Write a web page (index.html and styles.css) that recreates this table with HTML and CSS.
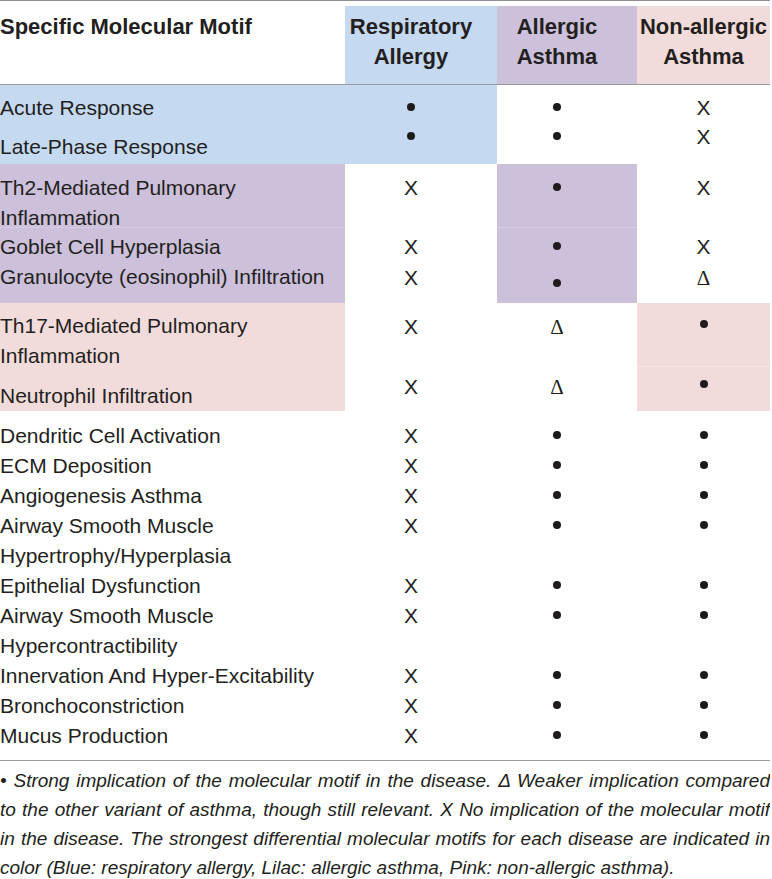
FILE: index.html
```html
<!DOCTYPE html>
<html lang="en">
<head>
<meta charset="utf-8">
<title>Molecular motifs table</title>
<link rel="stylesheet" href="styles.css">
</head>
<body>
<div class="table">
  <div class="row head">
    <div class="th c1">Specific Molecular Motif</div>
    <div class="th c2 blue">Respiratory<br>Allergy</div>
    <div class="th c3 lilac">Allergic<br>Asthma</div>
    <div class="th c4 pink">Non-allergic<br>Asthma</div>
  </div>

  <div class="row r-acute">
    <div class="c1 blue t8">Acute Response</div>
    <div class="c2 blue t8"><span class="dot"></span></div>
    <div class="c3 t8"><span class="dot"></span></div>
    <div class="c4 t8"><span class="x">X</span></div>
  </div>
  <div class="row r-late">
    <div class="c1 blue t10">Late-Phase Response</div>
    <div class="c2 blue t0"><span class="dot"></span></div>
    <div class="c3 t0"><span class="dot"></span></div>
    <div class="c4 t0"><span class="x">X</span></div>
  </div>

  <div class="row r-th2">
    <div class="c1 lilac t9">Th2-Mediated Pulmonary<br>Inflammation</div>
    <div class="c2 t9"><span class="x">X</span></div>
    <div class="c3 lilac t9"><span class="dot"></span></div>
    <div class="c4 t9"><span class="x">X</span></div>
  </div>
  <div class="row r-goblet">
    <div class="c1 lilac sep-l t5">Goblet Cell Hyperplasia</div>
    <div class="c2 t5"><span class="x">X</span></div>
    <div class="c3 lilac sep-l t5"><span class="dot"></span></div>
    <div class="c4 t5"><span class="x">X</span></div>
  </div>
  <div class="row r-gran">
    <div class="c1 lilac t0">Granulocyte (eosinophil) Infiltration</div>
    <div class="c2 t1"><span class="x">X</span></div>
    <div class="c3 lilac t7"><span class="dot"></span></div>
    <div class="c4 t1"><span class="delta">&Delta;</span></div>
  </div>

  <div class="row r-th17">
    <div class="c1 pink t8">Th17-Mediated Pulmonary<br>Inflammation</div>
    <div class="c2 t9"><span class="x">X</span></div>
    <div class="c3 t9"><span class="delta">&Delta;</span></div>
    <div class="c4 pink t7"><span class="dot"></span></div>
  </div>
  <div class="row r-neut">
    <div class="c1 pink t15">Neutrophil Infiltration</div>
    <div class="c2 t6"><span class="x">X</span></div>
    <div class="c3 t6"><span class="delta">&Delta;</span></div>
    <div class="c4 pink sep-p t4"><span class="dot"></span></div>
  </div>

  <div class="plain">
    <div class="row"><div class="c1">Dendritic Cell Activation</div><div class="c2"><span class="x">X</span></div><div class="c3"><span class="dot"></span></div><div class="c4"><span class="dot"></span></div></div>
    <div class="row"><div class="c1">ECM Deposition</div><div class="c2"><span class="x">X</span></div><div class="c3"><span class="dot"></span></div><div class="c4"><span class="dot"></span></div></div>
    <div class="row"><div class="c1">Angiogenesis Asthma</div><div class="c2"><span class="x">X</span></div><div class="c3"><span class="dot"></span></div><div class="c4"><span class="dot"></span></div></div>
    <div class="row"><div class="c1">Airway Smooth Muscle<br>Hypertrophy/Hyperplasia</div><div class="c2"><span class="x">X</span></div><div class="c3"><span class="dot"></span></div><div class="c4"><span class="dot"></span></div></div>
    <div class="row"><div class="c1">Epithelial Dysfunction</div><div class="c2"><span class="x">X</span></div><div class="c3"><span class="dot"></span></div><div class="c4"><span class="dot"></span></div></div>
    <div class="row"><div class="c1">Airway Smooth Muscle<br>Hypercontractibility</div><div class="c2"><span class="x">X</span></div><div class="c3"><span class="dot"></span></div><div class="c4"><span class="dot"></span></div></div>
    <div class="row"><div class="c1">Innervation And Hyper-Excitability</div><div class="c2"><span class="x">X</span></div><div class="c3"><span class="dot"></span></div><div class="c4"><span class="dot"></span></div></div>
    <div class="row"><div class="c1">Bronchoconstriction</div><div class="c2"><span class="x">X</span></div><div class="c3"><span class="dot"></span></div><div class="c4"><span class="dot"></span></div></div>
    <div class="row"><div class="c1">Mucus Production</div><div class="c2"><span class="x">X</span></div><div class="c3"><span class="dot"></span></div><div class="c4"><span class="dot"></span></div></div>
  </div>
</div>
<p class="note">&bull; Strong implication of the molecular motif in the disease. &Delta; Weaker implication compared to the other variant of asthma, though still relevant. X No implication of the molecular motif in the disease. The strongest differential molecular motifs for each disease are indicated in color (Blue: respiratory allergy, Lilac: allergic asthma, Pink: non-allergic asthma).</p>
</body>
</html>
```
FILE: styles.css
```css
html, body {
  margin: 0;
  padding: 0;
  background: #ffffff;
}

body {
  font-family: "Liberation Sans", Arial, sans-serif;
  color: #231f20;
  width: 770px;
}

.table {
  width: 770px;
  border-top: 1px solid #8f8f8f;
  border-bottom: 1px solid #9a9a9a;
  font-size: 21px;
  line-height: 30px;
}

.row {
  display: grid;
  grid-template-columns: 345px 152px 140px 133px;
}

.c1 { text-align: left; white-space: nowrap; }
.c2 { text-align: center; padding-right: 20px; }
.c3 { text-align: center; padding-right: 20px; }
.c4 { text-align: center; }

.blue  { background: #c5d9f1; }
.lilac { background: #ccc0da; }
.pink  { background: #f2dcdb; }

.head {
  margin-top: 5px;
  height: 78px;
  border-bottom: 1px solid #9a9a9a;
}

.th {
  font-weight: bold;
  font-size: 22px;
  line-height: 30px;
  padding-top: 6px;
}

.head .c1 { background: #ffffff; }

.r-acute  { height: 37px; }
.r-late   { height: 42px; }
.r-th2    { height: 63px; }
.r-goblet { height: 35px; }
.r-gran   { height: 41px; }
.r-th17   { height: 63px; }
.r-neut   { height: 45px; }

.t0  { padding-top: 0; }
.t1  { padding-top: 1px; }
.t4  { padding-top: 4px; }
.t5  { padding-top: 5px; }
.t6  { padding-top: 6px; }
.t7  { padding-top: 7px; }
.t8  { padding-top: 8px; }
.t9  { padding-top: 9px; }
.t10 { padding-top: 10px; }
.t15 { padding-top: 15px; }

.sep-l { box-shadow: inset 0 1px 0 #d8cee3; }
.sep-p { box-shadow: inset 0 1px 0 #f7e7e6; }

.plain {
  padding-top: 10px;
  padding-bottom: 9px;
}

.x {
  font-family: "Liberation Sans", Arial, sans-serif;
  font-weight: normal;
}

.delta {
  font-family: "Liberation Serif", "Times New Roman", serif;
  font-size: 21px;
}

.dot {
  display: inline-block;
  width: 8px;
  height: 8px;
  border-radius: 50%;
  background: #1f1b1c;
  vertical-align: 4px;
}

.note {
  margin: 5px 0 0 0;
  width: 770px;
  font-family: "Liberation Sans", Arial, sans-serif;
  font-style: italic;
  font-size: 19px;
  line-height: 29px;
  text-align: justify;
  color: #231f20;
}
```
